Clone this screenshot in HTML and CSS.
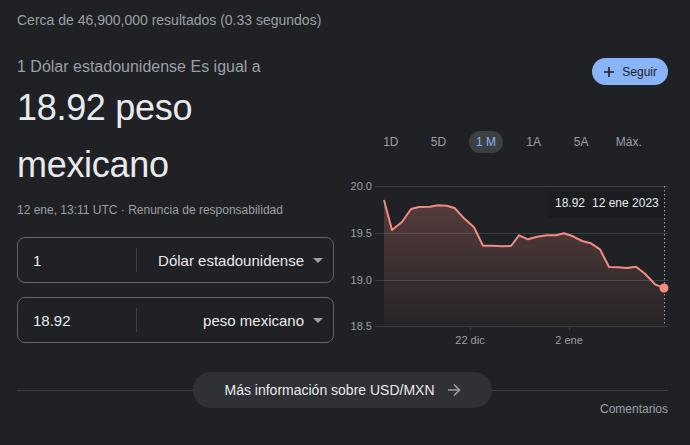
FILE: index.html
```html
<!DOCTYPE html>
<html lang="es">
<head>
<meta charset="utf-8">
<title>USD a MXN</title>
<link rel="stylesheet" href="styles.css">
</head>
<body>
<div class="stats">Cerca de 46,900,000 resultados (0.33 segundos)</div>
<div class="card">
  <div class="top">
    <div class="left">
      <div class="equals">1 Dólar estadounidense Es igual a</div>
      <div class="big">18.92 peso mexicano</div>
      <div class="meta">12 ene, 13:11 UTC · Renuncia de responsabilidad</div>
      <div class="box">
        <div class="amount">1</div>
        <div class="sep"></div>
        <div class="currency">Dólar estadounidense<span class="caret"></span></div>
      </div>
      <div class="box">
        <div class="amount">18.92</div>
        <div class="sep"></div>
        <div class="currency">peso mexicano<span class="caret"></span></div>
      </div>
    </div>
    <div class="right">
      <div class="follow-row">
        <button class="follow">
          <svg width="10" height="10" viewBox="0 0 10 10"><path d="M5 0v10M0 5h10" stroke="#202124" stroke-width="1.6" fill="none"/></svg>
          <span>Seguir</span>
        </button>
      </div>
      <div class="tabs">
        <div class="tab"><span>1D</span></div>
        <div class="tab"><span>5D</span></div>
        <div class="tab"><span class="active">1 M</span></div>
        <div class="tab"><span>1A</span></div>
        <div class="tab"><span>5A</span></div>
        <div class="tab"><span>Máx.</span></div>
      </div>
      <svg class="chart" width="323" height="168" viewBox="345 175 323 168">
        <defs>
          <linearGradient id="fill" gradientUnits="userSpaceOnUse" x1="0" y1="200" x2="0" y2="326">
            <stop offset="0" stop-color="#f28b82" stop-opacity="0.26"/>
            <stop offset="1" stop-color="#f28b82" stop-opacity="0.03"/>
          </linearGradient>
        </defs>
        <g stroke="#3c4043" stroke-width="1">
          <line x1="375" y1="186.5" x2="668" y2="186.5"/>
          <line x1="375" y1="233.5" x2="668" y2="233.5"/>
          <line x1="375" y1="280.5" x2="668" y2="280.5"/>
          <line x1="375" y1="326.5" x2="668" y2="326.5"/>
          <line x1="470.5" y1="326" x2="470.5" y2="330"/>
          <line x1="569.5" y1="326" x2="569.5" y2="330"/>
        </g>
        <g class="axis" text-anchor="end">
          <text x="372" y="190">20.0</text>
          <text x="372" y="237">19.5</text>
          <text x="372" y="284">19.0</text>
          <text x="372" y="330">18.5</text>
        </g>
        <g class="axis" text-anchor="middle">
          <text x="470" y="344">22 dic</text>
          <text x="569" y="344">2 ene</text>
        </g>
        <path fill="url(#fill)" d="M384,200 L392,230 L402,222 L411,209 L419,207 L430,206.7 L438,205.3 L447,205.7 L455,208.3 L464,218.3 L474,227.3 L483,245.7 L493,245.7 L502,246.3 L511,246 L519,235.3 L528,239.3 L537,236.7 L547,235.3 L556,235.3 L564,233.3 L573,236.3 L582,241 L591,243.3 L600,249.3 L609,267 L618,267.3 L627,268 L636,266.7 L645,273.7 L655,284.3 L664,288 L664,326 L384,326 Z"/>
        <path fill="none" stroke="#f28b82" stroke-width="2" stroke-linejoin="round" d="M384,200 L392,230 L402,222 L411,209 L419,207 L430,206.7 L438,205.3 L447,205.7 L455,208.3 L464,218.3 L474,227.3 L483,245.7 L493,245.7 L502,246.3 L511,246 L519,235.3 L528,239.3 L537,236.7 L547,235.3 L556,235.3 L564,233.3 L573,236.3 L582,241 L591,243.3 L600,249.3 L609,267 L618,267.3 L627,268 L636,266.7 L645,273.7 L655,284.3 L664,288"/>
        <line x1="664.5" y1="186" x2="664.5" y2="326" stroke="#9aa0a6" stroke-width="1" stroke-dasharray="1.5 2.5"/>
        <rect x="547" y="191" width="117" height="27" fill="#1c1d20"/>
        <text class="tip" x="555" y="207">18.92</text>
        <text class="tip" x="592" y="207">12 ene 2023</text>
        <circle cx="664" cy="288" r="4.5" fill="#f28b82"/>
      </svg>
    </div>
  </div>
  <div class="more">
    <div class="rule"></div>
    <button class="more-btn">
      <span>Más información sobre USD/MXN</span>
      <svg width="14" height="14" viewBox="0 0 14 14"><path d="M1 7h11.5M7 1.5l5.5 5.5-5.5 5.5" stroke="#9aa0a6" stroke-width="1.6" fill="none"/></svg>
    </button>
    <div class="rule"></div>
  </div>
  <div class="feedback">Comentarios</div>
</div>
</body>
</html>
```

FILE: styles.css
```css
html, body {
  margin: 0;
  padding: 0;
  background: #202124;
}
body {
  width: 690px;
  height: 445px;
  overflow: hidden;
  padding: 0 22px 0 17px;
  box-sizing: border-box;
  font-family: "Liberation Sans", Arial, sans-serif;
  color: #e8eaed;
}
.stats {
  padding-top: 10px;
  font-size: 14px;
  line-height: 20px;
  color: #9aa0a6;
}
.card {
  margin-top: 25px;
}
.top {
  display: flex;
  gap: 11px;
}
.left {
  width: 317px;
  flex: 0 0 317px;
}
.equals {
  font-size: 16px;
  line-height: 24px;
  color: #9aa0a6;
}
.big {
  font-size: 36px;
  line-height: 57px;
  letter-spacing: -0.3px;
  color: #e8eaed;
  width: 240px;
}
.meta {
  margin-top: 9px;
  font-size: 12px;
  line-height: 16px;
  color: #9aa0a6;
}
.box {
  display: flex;
  align-items: center;
  height: 46px;
  box-sizing: border-box;
  border: 1px solid #5f6368;
  border-radius: 8px;
  font-size: 15px;
  color: #e8eaed;
  margin-top: 14px;
}
.meta + .box {
  margin-top: 19px;
}
.amount {
  width: 103px;
  padding-left: 15px;
}
.sep {
  width: 1px;
  height: 24px;
  background: #3c4043;
}
.currency {
  flex: 1;
  display: flex;
  justify-content: flex-end;
  align-items: center;
  padding-right: 10px;
}
.caret {
  margin-left: 9px;
  width: 0;
  height: 0;
  border-left: 5px solid transparent;
  border-right: 5px solid transparent;
  border-top: 5px solid #9aa0a6;
}
.right {
  flex: 1;
  padding-top: 3px;
}
.follow-row {
  display: flex;
  justify-content: flex-end;
}
.follow {
  display: flex;
  align-items: center;
  gap: 8px;
  height: 27px;
  padding: 0 11px 0 12px;
  border: none;
  border-radius: 14px;
  background: #8ab4f8;
  color: #202124;
  font-family: "Liberation Sans", Arial, sans-serif;
  font-size: 12px;
}
.tabs {
  display: flex;
  margin-top: 46px;
  padding-left: 22px;
  height: 22px;
}
.tab {
  flex: 0 0 47.6px;
  display: flex;
  justify-content: center;
  align-items: center;
  font-size: 12px;
  color: #9aa0a6;
}
.tab span {
  display: block;
  line-height: 22px;
  padding: 0 7px;
  border-radius: 11px;
}
.tab .active {
  background: #3c4043;
  color: #8ab4f8;
}
.chart {
  display: block;
  margin-top: 22px;
  overflow: visible;
}
.axis {
  font-family: "Liberation Sans", Arial, sans-serif;
  font-size: 11px;
  fill: #9aa0a6;
}
.tip {
  font-family: "Liberation Sans", Arial, sans-serif;
  font-size: 12px;
  fill: #e8eaed;
}
.more {
  display: flex;
  align-items: center;
  margin-top: 29px;
}
.rule {
  flex: 1;
  height: 1px;
  background: #3c4043;
}
.more-btn {
  display: flex;
  align-items: center;
  justify-content: center;
  gap: 12px;
  width: 299px;
  height: 36px;
  border: none;
  border-radius: 18px;
  background: #303134;
  color: #e8eaed;
  font-family: "Liberation Sans", Arial, sans-serif;
  font-size: 14px;
}
.feedback {
  margin-top: -7px;
  text-align: right;
  font-size: 12px;
  line-height: 16px;
  color: #9aa0a6;
}
```
